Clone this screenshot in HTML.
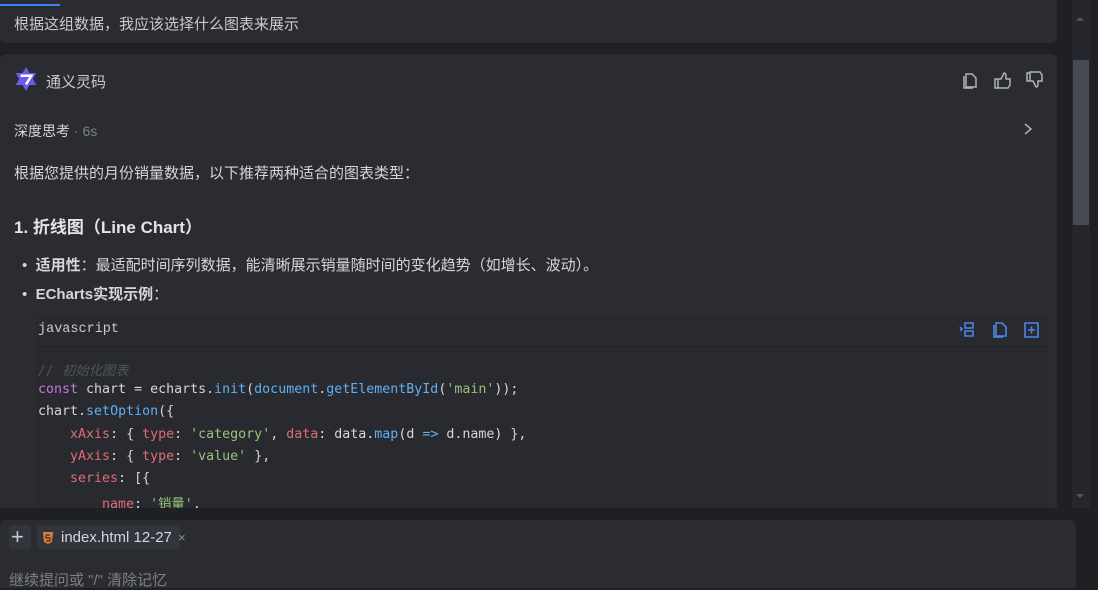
<!DOCTYPE html><html><head><meta charset="utf-8"><style>
body{margin:0;width:1098px;height:588px;background:#1e2024;overflow:hidden;position:relative;font-family:"Liberation Sans","Noto Sans CJK SC",sans-serif;color:#d4d6da}
.card{position:absolute;background:#2a2c32;border-radius:6px}
.t{position:absolute;white-space:nowrap}
.mono{font-family:"Liberation Mono","DejaVu Sans Mono","Noto Sans CJK SC",monospace;font-size:14px}
.code .t{font-family:"DejaVu Sans Mono","Noto Sans CJK SC",monospace;font-size:13.3px;color:#d4d6da}
.k{color:#c678dd}.f{color:#61afef}.s{color:#98c379}.p{color:#e06c75}
.code .c{color:#4f535b;font-style:italic}
</style></head><body>
<div class="card" style="left:0;top:0;width:1057px;height:43px;border-radius:0 0 6px 6px"></div>
<div style="position:absolute;left:0;top:4px;width:60px;height:2px;background:#3b82f6"></div>
<div class="t" style="left:14px;top:13px;font-size:15px;color:#c8cacf">根据这组数据，我应该选择什么图表来展示</div>
<div class="card" style="left:0;top:54px;width:1057px;height:460px;border-radius:6px 6px 0 0"></div>
<svg style="position:absolute;left:13px;top:66px" width="26" height="26" viewBox="0 0 24 24"><path d="M12 1l3.2 5.5h6.3l-3.2 5.5 3.2 5.5h-6.3L12 23l-3.2-5.5H2.5l3.2-5.5-3.2-5.5h6.3z" fill="#6b5cf0"/><path d="M7 9h10l-5 8" stroke="#fff" stroke-width="2.2" fill="none"/></svg>
<div class="t" style="left:46px;top:71px;font-size:15px;color:#c8cacf">通义灵码</div>
<svg style="position:absolute;left:962px;top:71px" width="84" height="18" viewBox="0 0 84 18" fill="none" stroke="#b0b3b8" stroke-width="1.5"><path d="M4 3h6l4 4v9H4z M2 5v12h9"/><path d="M36 8h3l3-6c2 0 2 2 2 3v3h4v6l-2 3h-10z M33 8h3v9h-3z"/><path d="M68 10h3l3 6c2 0 2-2 2-3v-3h4V4l-2-3h-10z M65 2h3v8h-3z"/></svg>
<div class="t" style="left:14px;top:121px;font-size:14px;color:#d4d6da">深度思考 <span style="color:#7d8087">· 6s</span></div>
<svg style="position:absolute;left:1022px;top:122px" width="12" height="14"><path d="M3 2l6 5-6 5" stroke="#b0b3b8" stroke-width="1.5" fill="none"/></svg>
<div class="t" style="left:14px;top:162px;font-size:15px">根据您提供的月份销量数据，以下推荐两种适合的图表类型：</div>
<div class="t" style="left:14px;top:213px;font-size:17px;font-weight:bold;color:#e2e4e8">1. 折线图（Line Chart）</div>
<div class="t" style="left:22px;top:254px;font-size:15px">•&nbsp;&nbsp;<b>适用性</b>：最适配时间序列数据，能清晰展示销量随时间的变化趋势（如增长、波动）。</div>
<div class="t" style="left:22px;top:283px;font-size:15px">•&nbsp;&nbsp;<b>ECharts实现示例</b>：</div>
<div style="position:absolute;left:36px;top:315px;width:1012px;height:193px;background:#282a30"></div>
<div style="position:absolute;left:36px;top:346px;width:1012px;height:1px;background:#222428"></div>
<div class="t mono" style="left:38px;top:322px;color:#c8cacf;font-size:13.5px">javascript</div>
<svg style="position:absolute;left:958px;top:321px" width="84" height="18" viewBox="0 0 84 18" fill="none" stroke="#4a86e8" stroke-width="1.6"><path d="M2 6l2 2-2 2 M7 2h8v5H7z M7 10h8v5H7z"/><path d="M38 2h6l4 4v9h-10z M36 4v12h9"/><path d="M67 2h13v14H67z M73.5 5.5v7 M70 9h7"/></svg>
<div class="code">
<div class="t c" style="left:38px;top:360px">// 初始化图表</div>
<div class="t" style="left:38px;top:382px"><span class="k">const</span> chart = echarts.<span class="f">init</span>(<span class="f">document</span>.<span class="f">getElementById</span>(<span class="s">'main'</span>));</div>
<div class="t" style="left:38px;top:404px">chart.<span class="f">setOption</span>({</div>
<div class="t" style="left:38px;top:427px">&nbsp;&nbsp;&nbsp;&nbsp;<span class="p">xAxis</span>: { <span class="p">type</span>: <span class="s">'category'</span>, <span class="p">data</span>: data.<span class="f">map</span>(d <span class="f">=&gt;</span> d.name) },</div>
<div class="t" style="left:38px;top:449px">&nbsp;&nbsp;&nbsp;&nbsp;<span class="p">yAxis</span>: { <span class="p">type</span>: <span class="s">'value'</span> },</div>
<div class="t" style="left:38px;top:471px">&nbsp;&nbsp;&nbsp;&nbsp;<span class="p">series</span>: [{</div>
<div class="t" style="left:38px;top:493px">&nbsp;&nbsp;&nbsp;&nbsp;&nbsp;&nbsp;&nbsp;&nbsp;<span class="p">name</span>: <span class="s">'销量'</span>,</div>
</div>
<div style="position:absolute;left:0;top:508px;width:1098px;height:12px;background:#1e2024"></div>
<div style="position:absolute;left:1072px;top:0;width:18px;height:508px;background:#25272c"></div>
<div style="position:absolute;left:1073px;top:60px;width:16px;height:165px;background:#454a55"></div>
<div style="position:absolute;left:1076px;top:13px;width:0;height:0;border:4px solid transparent;border-bottom-color:#555"></div>
<div style="position:absolute;left:1076px;top:494px;width:0;height:0;border:4px solid transparent;border-top-color:#555"></div>
<div class="card" style="left:0;top:520px;width:1076px;height:68px;border-radius:6px 6px 0 0"></div>
<div style="position:absolute;left:9px;top:525px;width:22px;height:24px;background:#32353b;border-radius:3px"></div>
<div class="t" style="left:11px;top:524px;font-size:22px;color:#c8cacf;font-weight:300">+</div>
<div style="position:absolute;left:37px;top:525px;width:143px;height:24px;background:#32353b;border-radius:3px"></div>
<svg style="position:absolute;left:43px;top:532px" width="10" height="12"><path d="M0 0h10l-1 10-4 2-4-2z" fill="#e8793a"/><path d="M3 3h4M3 3v3h4v3H3" stroke="#32353b" stroke-width="1.2" fill="none"/></svg>
<div class="t" style="left:61px;top:529px;font-size:15px;color:#d4d6da">index.html 12-27</div>
<div class="t" style="left:178px;top:530px;font-size:13px;color:#8a8d93">×</div>
<div class="t" style="left:9px;top:569px;font-size:15px;color:#7d8087">继续提问或 "/" 清除记忆</div>
</body></html>
